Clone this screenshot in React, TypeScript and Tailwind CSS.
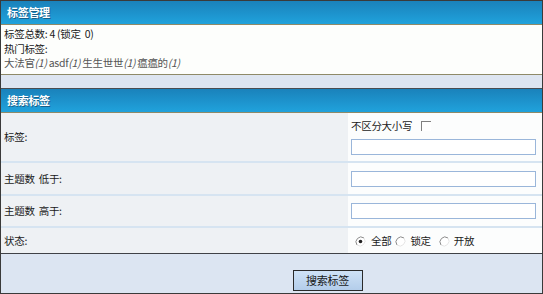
import React from 'react'

const font = "font-['Noto_Sans_CJK_SC','Liberation_Sans',sans-serif]"

function Header({ title }: { title: string }) {
  return (
    <div className="h-[24px] shrink-0 bg-gradient-to-b from-[#1a82bb] to-[#20a2dc] border-b border-[#8e8a68] flex items-center pl-[6px]">
      <span className="text-white font-bold text-[11px] leading-none [text-shadow:1px_1px_0_#1a5f88]">{title}</span>
    </div>
  )
}

function Radio({ checked }: { checked?: boolean }) {
  return (
    <svg width="11" height="11" viewBox="0 0 11 11" className="shrink-0">
      <circle cx="5.5" cy="5.5" r="5" fill="#fff" />
      <path d="M2 9 A5 5 0 0 1 9 2" fill="none" stroke="#8a8a8a" strokeWidth="1" />
      <path d="M9 2 A5 5 0 0 1 2 9" fill="none" stroke="#e4e4e4" strokeWidth="1" />
      {checked && <circle cx="5.5" cy="5.5" r="1.8" fill="#222" />}
    </svg>
  )
}

function Input() {
  return <div className="w-[185px] h-[16px] bg-white border border-[#9ab6da]" />
}

function Row({ label, height, children }: { label: string; height: string; children: React.ReactNode }) {
  return (
    <div className={`flex ${height}`}>
      <div className="w-[347px] shrink-0 bg-[#eef1f4] flex items-center pl-[3px] text-[#1a1a1a] whitespace-pre">{label}</div>
      <div className="flex-1 bg-[#fcfdfd] pl-[3px] flex flex-col justify-center">{children}</div>
    </div>
  )
}

function Sep() {
  return <div className="h-[2px] shrink-0 bg-[#d6e4f1]" />
}

export default function App() {
  return (
    <div className={`w-[543px] h-[294px] border border-[#3a3a3a] flex flex-col bg-[#dce5f2] text-[10.5px] tracking-[-0.3px] leading-[14px] ${font}`}>
      <Header title="标签管理" />
      <div className="h-[50px] shrink-0 bg-[#fdfefc] border-b border-[#8e8a68] pl-[3px] pt-[2px] text-[#1a1a1a] leading-[14.5px]">
        <div className="whitespace-pre">标签总数: 4 (锁定  0)</div>
        <div>热门标签:</div>
        <div className="text-[#555] whitespace-pre">
          大法官<i>(1)</i> asdf<i>(1)</i> 生生世世<i>(1)</i> 瘟瘟的<i>(1)</i>
        </div>
      </div>
      <div className="h-[14px] shrink-0 bg-[#dde5f1] border-b border-[#4a4d52]" />
      <Header title="搜索标签" />
      <Row label="标签:" height="h-[48px]">
        <div className="flex items-center gap-[9px] text-[#1a1a1a] mb-[6px]">
          <span>不区分大小写</span>
          <span className="w-[10px] h-[10px] bg-white border-t border-l border-[#808080]" />
        </div>
        <Input />
      </Row>
      <Sep />
      <Row label="主题数  低于:" height="h-[31px]">
        <Input />
      </Row>
      <Sep />
      <Row label="主题数  高于:" height="h-[30px]">
        <Input />
      </Row>
      <Sep />
      <Row label="状态:" height="h-[25px]">
        <div className="flex items-center text-[#1a1a1a] pl-[4px] pt-[1px]">
          <Radio checked />
          <span className="ml-[5px] mr-[4px]">全部</span>
          <Radio />
          <span className="ml-[4px] mr-[8px]">锁定</span>
          <Radio />
          <span className="ml-[4px]">开放</span>
        </div>
      </Row>
      <div className="flex-1 border-t border-[#3f4247] flex items-end justify-center pl-[112px] pb-[2px]">
        <button className="w-[70px] h-[21px] bg-gradient-to-b from-[#cfe2f6] to-[#b3cdea] border border-[#2a2a2a] text-[#1a1a1a] text-[11px] leading-none">
          搜索标签
        </button>
      </div>
    </div>
  )
}
